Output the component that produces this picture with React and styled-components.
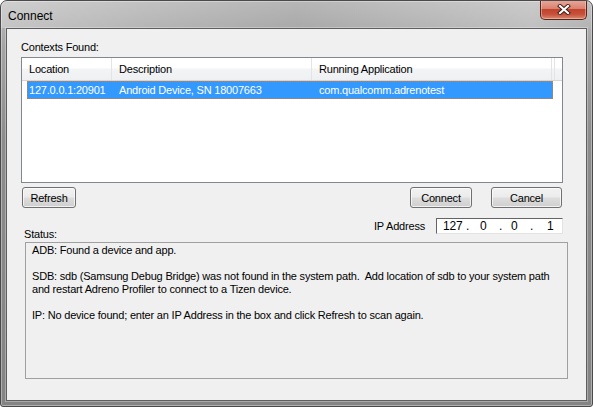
import React from "react";
import styled, { createGlobalStyle } from "styled-components";

const Global = createGlobalStyle`
  html, body { margin: 0; padding: 0; background: #ffffff; }
  body { font-family: "Liberation Sans", Arial, sans-serif; font-size: 11px; letter-spacing: -0.2px; color: #000; }
  * { box-sizing: border-box; }
`;

const Window = styled.div`
  width: 593px;
  height: 407px;
  border: 1px solid #4a4a4a;
  border-radius: 7px 7px 3px 3px;
  background: linear-gradient(180deg, #bcbcbc 0px, #a3a3a3 50px, #8c8c8c 140px, #848484 100%);
  box-shadow: inset 0 0 0 1px rgba(255, 255, 255, 0.35);
  display: flex;
  flex-direction: column;
  overflow: hidden;
`;

const TitleBar = styled.div`
  height: 27px;
  flex: none;
  display: flex;
  align-items: flex-start;
  background: linear-gradient(90deg, rgba(255,255,255,0.28) 0%, rgba(255,255,255,0.08) 25%, rgba(0,0,0,0.03) 50%, rgba(255,255,255,0.1) 75%, rgba(255,255,255,0.22) 90%, rgba(255,255,255,0.05) 100%);
`;

const Title = styled.div`
  font-family: "Liberation Sans", Arial, sans-serif;
  font-size: 12px;
  letter-spacing: 0;
  line-height: 14px;
  padding: 8px 0 0 7px;
  color: #000;
`;

const CloseButton = styled.div`
  margin-left: auto;
  margin-right: 5px;
  margin-top: -1px;
  width: 47px;
  height: 20px;
  border: 1px solid #5a2418;
  border-top: none;
  border-radius: 0 0 5px 5px;
  background: linear-gradient(180deg, #e9a99b 0%, #d9826f 45%, #c1442c 50%, #c8503a 75%, #d88a6e 100%);
  box-shadow: inset 0 0 0 1px rgba(255, 220, 210, 0.45);
  display: flex;
  align-items: center;
  justify-content: center;
`;

const Client = styled.div`
  flex: 1;
  margin: 0 5px 5px 5px;
  background: #f0f0f0;
  border: 1px solid #5e5e5e;
  box-shadow: 0 0 0 1px rgba(255, 255, 255, 0.3);
  padding: 0 23px 0 14px;
  display: flex;
  flex-direction: column;
`;

const Label = styled.div`
  line-height: 13px;
  height: 13px;
  margin-top: ${(p) => p.$mt || 0}px;
  margin-left: ${(p) => p.$ml || 0}px;
  align-self: ${(p) => p.$align || "auto"};
  white-space: nowrap;
`;

const ListBox = styled.div`
  margin-top: 3px;
  height: 126px;
  border: 1px solid #828790;
  background: #ffffff;
  display: flex;
  flex-direction: column;
`;

const Header = styled.div`
  height: 23px;
  display: flex;
  border-bottom: 1px solid #d5d5d5;
  background: linear-gradient(180deg, #ffffff 0%, #ffffff 45%, #f3f4f6 50%, #eff0f2 100%);
`;

const HeaderCell = styled.div`
  width: ${(p) => p.$w}px;
  flex: none;
  padding-left: 7px;
  line-height: 22px;
  border-right: 1px solid #e3e4e6;
  white-space: nowrap;
`;

const HeaderFiller = styled.div`
  width: 3px;
  flex: none;
  border-right: 1px solid #e3e4e6;
`;

const Row = styled.div`
  margin: 0 0 0 5px;
  width: 526px;
  height: 18px;
  display: flex;
  align-items: center;
  background: ${(p) => (p.$selected ? "#3399ff" : "transparent")};
  color: ${(p) => (p.$selected ? "#ffffff" : "#000")};
  outline: ${(p) => (p.$selected ? "1px dotted #e07820" : "none")};
  outline-offset: -1px;
`;

const Cell = styled.div`
  width: ${(p) => p.$w}px;
  flex: none;
  padding-left: ${(p) => p.$pl}px;
  white-space: nowrap;
  line-height: 16px;
`;

const ButtonRow = styled.div`
  margin-top: 4px;
  display: flex;
  align-items: center;
  gap: 19px;
`;

const Button = styled.button`
  font-family: "Liberation Sans", Arial, sans-serif;
  font-size: 11px;
  letter-spacing: -0.2px;
  color: #000;
  flex: none;
  width: ${(p) => p.$w}px;
  height: 21px;
  margin-left: ${(p) => p.$ml || "0"};
  margin-right: ${(p) => p.$mr || "0"};
  padding: 0;
  border: 1px solid #707070;
  border-radius: 3px;
  background: linear-gradient(180deg, #f2f2f2 0%, #ebebeb 48%, #dddddd 52%, #cfcfcf 100%);
  box-shadow: inset 0 0 0 1px rgba(255, 255, 255, 0.7);
`;

const MiddleRow = styled.div`
  margin-top: 10px;
  height: 23px;
  display: flex;
  align-items: flex-start;
`;

const IpGroup = styled.div`
  margin-left: auto;
  display: flex;
  align-items: center;
  gap: 11px;
`;

const IpBox = styled.div`
  width: 127px;
  height: 16px;
  background: #ffffff;
  border-top: 1px solid #646464;
  border-left: 1px solid #646464;
  border-right: 1px solid #e3e3e3;
  border-bottom: 1px solid #e3e3e3;
  display: flex;
  align-items: center;
  line-height: 14px;
  padding-left: 6px;
`;

const IpPart = styled.span`
  width: ${(p) => p.$w}px;
  flex: none;
  font-size: 12px;
`;

const StatusBox = styled.div`
  margin: 1px -5px 0 4px;
  height: 137px;
  border: 1px solid #a0a0a0;
  padding: 1px 6px;
  line-height: 13px;
  white-space: nowrap;
`;

const Para = styled.div`
  margin-bottom: 13px;
`;

function CloseIcon() {
  return (
    <svg width="14" height="11" viewBox="0 0 14 11">
      <path d="M3 2 L11 9 M11 2 L3 9" stroke="#3b1a14" strokeWidth="4" strokeLinecap="square" fill="none" />
      <path d="M3 2 L11 9 M11 2 L3 9" stroke="#ffffff" strokeWidth="2.2" strokeLinecap="square" fill="none" />
    </svg>
  );
}

export default function App() {
  return (
    <>
      <Global />
      <Window>
        <TitleBar>
          <Title>Connect</Title>
          <CloseButton>
            <CloseIcon />
          </CloseButton>
        </TitleBar>
        <Client>
          <Label $mt={12}>Contexts Found:</Label>
          <ListBox>
            <Header>
              <HeaderCell $w={90}>Location</HeaderCell>
              <HeaderCell $w={200}>Description</HeaderCell>
              <HeaderCell $w={240}>Running Application</HeaderCell>
              <HeaderFiller />
            </Header>
            <Row $selected>
              <Cell $w={85} $pl={2}>127.0.0.1:20901</Cell>
              <Cell $w={200} $pl={7}>Android Device, SN 18007663</Cell>
              <Cell $w={241} $pl={7}>com.qualcomm.adrenotest</Cell>
            </Row>
          </ListBox>
          <ButtonRow>
            <Button $w={54} $ml="1px">Refresh</Button>
            <Button $w={62} $ml="auto">Connect</Button>
            <Button $w={71} $mr="1px">Cancel</Button>
          </ButtonRow>
          <MiddleRow>
            <Label $ml={3} $align="flex-end">Status:</Label>
            <IpGroup>
              <Label>IP Address</Label>
              <IpBox>
                <IpPart $w={23}>127</IpPart>
                <IpPart $w={14}>.</IpPart>
                <IpPart $w={19}>0</IpPart>
                <IpPart $w={12}>.</IpPart>
                <IpPart $w={19}>0</IpPart>
                <IpPart $w={17}>.</IpPart>
                <IpPart $w={10}>1</IpPart>
              </IpBox>
            </IpGroup>
          </MiddleRow>
          <StatusBox>
            <Para>ADB: Found a device and app.</Para>
            <Para>
              SDB: sdb (Samsung Debug Bridge) was not found in the system path.&nbsp; Add location of sdb to your system path
              <br />
              and restart Adreno Profiler to connect to a Tizen device.
            </Para>
            <Para>IP: No device found; enter an IP Address in the box and click Refresh to scan again.</Para>
          </StatusBox>
        </Client>
      </Window>
    </>
  );
}
